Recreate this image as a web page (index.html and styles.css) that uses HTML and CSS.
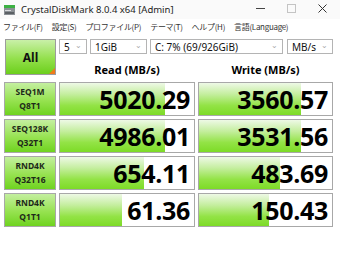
FILE: index.html
```html
<!DOCTYPE html>
<html lang="ja">
<head>
<meta charset="UTF-8" />
<title>CrystalDiskMark 8.0.4 x64 [Admin]</title>
<link rel="stylesheet" href="styles.css">
</head>
<body>
  <div class="titlebar">
    <svg class="app-icon" width="11" height="10" viewBox="0 0 11 10">
      <rect x="0" y="0" width="11" height="3" fill="#3cb043" />
      <rect x="0" y="3" width="11" height="7" fill="#8a8f94" />
      <rect x="1" y="5" width="6" height="1" fill="#d8dadc" />
      <rect x="1" y="7" width="9" height="2" fill="#5b6064" />
    </svg>
    <span class="title">CrystalDiskMark 8.0.4 x64 [Admin]</span>
    <div class="win-controls">
      <svg class="wc" width="9" height="9" viewBox="0 0 9 9">
        <line x1="0" y1="4.5" x2="9" y2="4.5" stroke="#444" stroke-width="1" />
      </svg>
      <svg class="wc" width="9" height="9" viewBox="0 0 9 9">
        <rect x="0.5" y="0.5" width="8" height="8" fill="none" stroke="#c4c4c4" stroke-width="1" />
      </svg>
      <svg class="wc" width="9" height="9" viewBox="0 0 9 9">
        <path d="M0.5 0.5 L8.5 8.5 M8.5 0.5 L0.5 8.5" stroke="#333" stroke-width="1" />
      </svg>
    </div>
  </div>

  <div class="menubar">
    <span>ファイル(F)</span>
    <span>設定(S)</span>
    <span>プロファイル(P)</span>
    <span>テーマ(T)</span>
    <span>ヘルプ(H)</span>
    <span>言語(Language)</span>
  </div>

  <div class="main">
    <button class="all-btn">All</button>
    <div class="controls">
      <div class="select w-count">5<span class="chev">&#8964;</span></div>
      <div class="select w-size">1GiB<span class="chev">&#8964;</span></div>
      <div class="select w-drive">C: 7% (69/926GiB)<span class="chev">&#8964;</span></div>
      <div class="select w-unit">MB/s<span class="chev">&#8964;</span></div>
    </div>
    <div class="col-head read-head">Read (MB/s)</div>
    <div class="col-head write-head">Write (MB/s)</div>

    <div class="label">SEQ1M<br>Q8T1</div>
    <div class="value"><div class="bar" style="width: 78%"></div><span>5020.29</span></div>
    <div class="value"><div class="bar" style="width: 77%"></div><span>3560.57</span></div>

    <div class="label">SEQ128K<br>Q32T1</div>
    <div class="value"><div class="bar" style="width: 78%"></div><span>4986.01</span></div>
    <div class="value"><div class="bar" style="width: 77%"></div><span>3531.56</span></div>

    <div class="label">RND4K<br>Q32T16</div>
    <div class="value"><div class="bar" style="width: 63%"></div><span>654.11</span></div>
    <div class="value"><div class="bar" style="width: 61%"></div><span>483.69</span></div>

    <div class="label">RND4K<br>Q1T1</div>
    <div class="value"><div class="bar" style="width: 46%"></div><span>61.36</span></div>
    <div class="value"><div class="bar" style="width: 53%"></div><span>150.43</span></div>
  </div>
</body>
</html>
```

FILE: styles.css
```css
body {
  margin: 0;
  width: 340px;
  height: 280px;
  background: #fff;
  font-family: 'Noto Sans', 'Noto Sans CJK JP', sans-serif;
  color: #000;
  overflow: hidden;
}

.titlebar {
  height: 19px;
  display: flex;
  align-items: center;
  padding-left: 4px;
  background: #fafafa;
}

.app-icon {
  margin-right: 6px;
}

.title {
  font-size: 9.5px;
  color: #222;
}

.win-controls {
  margin-left: auto;
  display: flex;
  align-items: center;
  gap: 22px;
  padding-right: 13px;
  margin-top: -2px;
}

.menubar {
  height: 15px;
  display: flex;
  align-items: center;
  gap: 9px;
  padding-left: 3px;
  font-family: 'Noto Sans CJK JP', sans-serif;
  font-size: 8px;
  letter-spacing: -0.3px;
  color: #333;
}

.main {
  display: grid;
  grid-template-columns: 52px 136px 135px;
  grid-template-rows: 16px 21px repeat(4, 34px);
  column-gap: 3px;
  row-gap: 3px;
  padding: 5px 7px 0 4px;
}

.all-btn {
  grid-row: 1 / 3;
  margin: 0 0 4px 1px;
  position: relative;
  border: 1px solid #9c9c9c;
  background: linear-gradient(to bottom, #c9f0a8 0%, #93e04c 55%, #6ccf1c 100%);
  font-family: 'Noto Sans', sans-serif;
  font-weight: bold;
  font-size: 12px;
  padding: 0;
  color: #111;
}

.all-btn::after {
  content: '';
  position: absolute;
  right: 0;
  bottom: 0;
  border-style: solid;
  border-width: 0 0 6px 6px;
  border-color: transparent transparent #f07a1a transparent;
}

.controls {
  grid-column: 2 / 4;
  display: flex;
  gap: 3px;
}

.select {
  height: 15px;
  box-sizing: border-box;
  border: 1px solid #b4b4b4;
  display: flex;
  align-items: center;
  padding-left: 4px;
  font-size: 10px;
  color: #111;
}

.chev {
  margin-left: auto;
  margin-right: 4px;
  color: #aaa;
  font-size: 8px;
  line-height: 1;
  margin-top: -4px;
}

.w-count { width: 28px; }
.w-size { width: 57px; }
.w-drive { width: 133px; }
.w-unit { width: 46px; margin-left: 1px; }

.col-head {
  font-weight: bold;
  font-size: 11px;
  text-align: center;
  align-self: center;
  margin-top: 2px;
}

.label {
  border: 1px solid #a8a8a8;
  background: linear-gradient(to bottom, #c4efa0 0%, #96e250 55%, #6fd320 100%);
  font-weight: bold;
  font-size: 8.5px;
  line-height: 14px;
  color: #1e2a1a;
  text-align: center;
  display: flex;
  flex-direction: column;
  justify-content: center;
}

.value {
  position: relative;
  border: 1px solid #a8a8a8;
  background: #fff;
  display: flex;
  align-items: center;
  justify-content: flex-end;
  padding-right: 4px;
}

.bar {
  position: absolute;
  left: 0;
  top: 0;
  bottom: 0;
  background: linear-gradient(to bottom, #eef9e6 0%, #c4ee9e 35%, #93e346 70%, #7ddb27 100%);
}

.value span {
  position: relative;
  font-family: 'Open Sans', sans-serif;
  font-weight: bold;
  font-size: 25px;
  letter-spacing: -0.3px;
  color: #000;
}
```
